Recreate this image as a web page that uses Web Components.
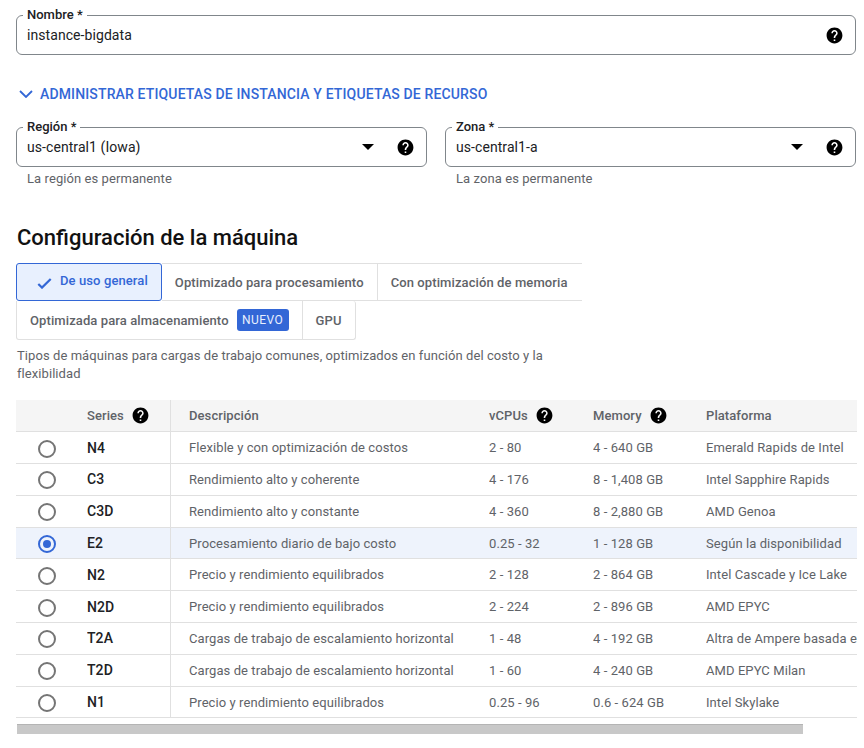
<!DOCTYPE html>
<html lang="es">
<head>
<meta charset="utf-8">
<title>Crear instancia</title>
<style>
  html, body { margin: 0; background: #fff; overflow: hidden; height: 100%; }
  body { font-family: Roboto, "Liberation Sans", sans-serif; color: #202124; }
  machine-form { display: block; width: 864px; height: 748px; }
</style>
</head>
<body>
<machine-form></machine-form>

<template id="help-tpl">
  <style>
    :host { display: inline-flex; width: 19px; height: 19px; flex: none; }
    svg { width: 100%; height: 100%; display: block; }
  </style>
  <svg viewBox="0 0 24 24"><path fill="#000" d="M12 2C6.48 2 2 6.48 2 12s4.48 10 10 10 10-4.48 10-10S17.52 2 12 2zm1 17h-2v-2h2v2zm2.07-7.75l-.9.92C13.45 12.9 13 13.5 13 15h-2v-.5c0-1.1.45-2.1 1.17-2.83l1.24-1.26c.37-.36.59-.86.59-1.41 0-1.1-.9-2-2-2s-2 .9-2 2H8c0-2.21 1.79-4 4-4s4 1.79 4 4c0 .88-.36 1.68-.93 2.25z"/></svg>
</template>

<script>
function tpl(id) {
  return document.getElementById(id).content.cloneNode(true);
}

class GcHelp extends HTMLElement {
  connectedCallback() {
    this.attachShadow({ mode: 'open' }).appendChild(tpl('help-tpl'));
  }
}
customElements.define('gc-help', GcHelp);

class GcField extends HTMLElement {
  connectedCallback() {
    const select = this.hasAttribute('select');
    const hint = this.getAttribute('hint');
    this.attachShadow({ mode: 'open' }).innerHTML = `
      <style>
        :host { display: block; }
        .box {
          position: relative;
          height: 40px;
          box-sizing: border-box;
          border: 1px solid #80868b;
          border-radius: 6px;
          display: flex;
          align-items: center;
          padding: 0 11px 0 10px;
        }
        .label {
          position: absolute;
          left: 6px;
          top: -9px;
          padding: 0 4px;
          background: #fff;
          font-size: 13px;
          line-height: 16px;
          font-weight: 500;
          color: #202124;
        }
        .value { flex: 1; font-size: 14px; letter-spacing: .07px; line-height: 20px; color: #202124; }
        .arrow {
          width: 0; height: 0;
          border-left: 6px solid transparent;
          border-right: 6px solid transparent;
          border-top: 6px solid #000;
          margin-right: 22px;
        }
        .hint { font-size: 13px; letter-spacing: .08px; line-height: 16px; color: #5f6368; padding: 4px 0 0 11px; }
      </style>
      <div class="box">
        <span class="label">${this.getAttribute('label')}</span>
        <span class="value">${this.getAttribute('value')}</span>
        ${select ? '<span class="arrow"></span>' : ''}
        <gc-help></gc-help>
      </div>
      ${hint ? `<div class="hint">${hint}</div>` : ''}
    `;
  }
}
customElements.define('gc-field', GcField);

class GcLink extends HTMLElement {
  connectedCallback() {
    this.attachShadow({ mode: 'open' }).innerHTML = `
      <style>
        :host {
          display: flex;
          align-items: center;
          gap: 7px;
          color: #3367d6;
          font-size: 14px;
          font-weight: 500;
          letter-spacing: .14px;
          line-height: 20px;
        }
        svg { width: 14px; height: 8px; margin-left: 3px; display: block; }
      </style>
      <svg viewBox="0 0 14 8"><path d="M1 1l6 6 6-6" fill="none" stroke="#3367d6" stroke-width="1.8"/></svg>
      <slot></slot>
    `;
  }
}
customElements.define('gc-link', GcLink);

class GcTab extends HTMLElement {
  connectedCallback() {
    this.attachShadow({ mode: 'open' }).innerHTML = `
      <style>
        :host {
          display: flex;
          align-items: center;
          box-sizing: border-box;
          height: 100%;
          padding: 0 13px;
          font-size: 13px;
          letter-spacing: .1px;
          font-weight: 500;
          color: #5f6368;
          white-space: nowrap;
          border: solid #e0e0e0;
          border-width: 1px 1px 1px 0;
        }
        :host([first]) { border-left-width: 1px; }
        :host([open-end]) { border-right-width: 0; flex: 1; }
        :host([selected]) {
          background: #e8f0fe;
          color: #3367d6;
          border: 1px solid #3367d6;
          border-radius: 3px;
          padding: 0 13px 3px 20px;
          gap: 8px;
        }
        svg { width: 15px; height: 12px; margin-top: 4px; }
      </style>
      ${this.hasAttribute('selected') ? '<svg viewBox="0 0 15 12"><path d="M1.3 7l3.7 3.6L13.7 2" fill="none" stroke="#3367d6" stroke-width="2.2"/></svg>' : ''}
      <slot></slot>
    `;
  }
}
customElements.define('gc-tab', GcTab);

class GcBadge extends HTMLElement {
  connectedCallback() {
    this.attachShadow({ mode: 'open' }).innerHTML = `
      <style>
        :host {
          display: inline-flex;
          align-items: center;
          justify-content: center;
          width: 52px;
          height: 22px;
          margin-left: 8px;
          background: #3367d6;
          color: #e8f0fe;
          border-radius: 3px;
          font-size: 12px;
          font-weight: 400;
          letter-spacing: .4px;
        }
      </style>
      <slot></slot>
    `;
  }
}
customElements.define('gc-badge', GcBadge);

class GcRadio extends HTMLElement {
  connectedCallback() {
    this.attachShadow({ mode: 'open' }).innerHTML = `
      <style>
        :host {
          display: block;
          box-sizing: border-box;
          width: 18px;
          height: 18px;
          margin-top: 2px;
          border: 2px solid #757575;
          border-radius: 50%;
          position: relative;
        }
        :host([checked]) { border-color: #3367d6; }
        .dot { position: absolute; inset: 3px; border-radius: 50%; background: #3367d6; }
      </style>
      ${this.hasAttribute('checked') ? '<div class="dot"></div>' : ''}
    `;
  }
}
customElements.define('gc-radio', GcRadio);

class MachineRow extends HTMLElement {
  connectedCallback() {
    const d = this.dataset;
    const on = this.hasAttribute('selected');
    this.attachShadow({ mode: 'open' }).innerHTML = `
      <style>
        :host {
          display: grid;
          grid-template-columns: 71px 83px 1px 318px 104px 113px 1fr;
          box-sizing: border-box;
          height: 31.8px;
          border-bottom: 1px solid #e0e0e0;
          font-size: 13px;
          letter-spacing: .08px;
          color: #5f6368;
          white-space: nowrap;
          overflow: hidden;
        }
        :host([selected]) { background: #eef3fc; }
        .cell { display: flex; align-items: center; min-width: 0; overflow: hidden; }
        .radio { padding-left: 22px; }
        .series { font-size: 14px; font-weight: 500; color: #202124; }
        .sep { background: #e0e0e0; }
        .desc { padding-left: 18px; }
      </style>
      <div class="cell radio"><gc-radio ${on ? 'checked' : ''}></gc-radio></div>
      <div class="cell series">${d.series}</div>
      <div class="sep"></div>
      <div class="cell desc">${d.desc}</div>
      <div class="cell">${d.cpu}</div>
      <div class="cell">${d.mem}</div>
      <div class="cell">${d.plat}</div>
    `;
  }
}
customElements.define('machine-row', MachineRow);

class MachineHead extends HTMLElement {
  connectedCallback() {
    this.attachShadow({ mode: 'open' }).innerHTML = `
      <style>
        :host {
          display: grid;
          grid-template-columns: 71px 83px 1px 318px 104px 113px 1fr;
          box-sizing: border-box;
          height: 32.3px;
          background: #f5f5f5;
          border-bottom: 1px solid #e0e0e0;
          font-size: 13px;
          letter-spacing: .08px;
          font-weight: 500;
          color: #5f6368;
        }
        .cell { display: flex; align-items: center; gap: 7px; }
        .sep { background: #e0e0e0; }
        .desc { padding-left: 18px; }
      </style>
      <div class="cell"></div>
      <div class="cell">Series <gc-help></gc-help></div>
      <div class="sep"></div>
      <div class="cell desc">Descripción</div>
      <div class="cell">vCPUs <gc-help></gc-help></div>
      <div class="cell">Memory <gc-help></gc-help></div>
      <div class="cell">Plataforma</div>
    `;
  }
}
customElements.define('machine-head', MachineHead);

const MACHINES = [
  ['N4', 'Flexible y con optimización de costos', '2 - 80', '4 - 640 GB', 'Emerald Rapids de Intel'],
  ['C3', 'Rendimiento alto y coherente', '4 - 176', '8 - 1,408 GB', 'Intel Sapphire Rapids'],
  ['C3D', 'Rendimiento alto y constante', '4 - 360', '8 - 2,880 GB', 'AMD Genoa'],
  ['E2', 'Procesamiento diario de bajo costo', '0.25 - 32', '1 - 128 GB', 'Según la disponibilidad'],
  ['N2', 'Precio y rendimiento equilibrados', '2 - 128', '2 - 864 GB', 'Intel Cascade y Ice Lake'],
  ['N2D', 'Precio y rendimiento equilibrados', '2 - 224', '2 - 896 GB', 'AMD EPYC'],
  ['T2A', 'Cargas de trabajo de escalamiento horizontal', '1 - 48', '4 - 192 GB', 'Altra de Ampere basada en Arm'],
  ['T2D', 'Cargas de trabajo de escalamiento horizontal', '1 - 60', '4 - 240 GB', 'AMD EPYC Milan'],
  ['N1', 'Precio y rendimiento equilibrados', '0.25 - 96', '0.6 - 624 GB', 'Intel Skylake']
];

class MachineTable extends HTMLElement {
  connectedCallback() {
    const rows = MACHINES.map(m => `<machine-row ${m[0] === 'E2' ? 'selected' : ''}
      data-series="${m[0]}" data-desc="${m[1]}" data-cpu="${m[2]}" data-mem="${m[3]}" data-plat="${m[4]}"></machine-row>`).join('');
    this.attachShadow({ mode: 'open' }).innerHTML = `
      <style>
        :host { display: block; width: 841px; overflow: hidden; }
        .bar { height: 10px; width: 786px; margin: 6px 0 0 1px; background: #c8c8c8; border-top: 1px solid #b4b4b4; box-sizing: border-box; }
      </style>
      <machine-head></machine-head>
      ${rows}
      <div class="bar"></div>
    `;
  }
}
customElements.define('machine-table', MachineTable);

class MachineForm extends HTMLElement {
  connectedCallback() {
    this.attachShadow({ mode: 'open' }).innerHTML = `
      <style>
        :host { display: block; box-sizing: border-box; padding: 15px 8px 0 16px; }
        gc-link { margin-top: 29px; }
        .pair { display: grid; grid-template-columns: 411px 411px; gap: 18px; margin-top: 23px; }
        h2 { margin: 37px 0 0 1px; font-size: 22px; line-height: 28px; font-weight: 500; color: #111; }
        .tabs { margin-top: 11px; width: 566px; }
        .tab-row { display: flex; height: 38px; }
        .tab-row + .tab-row { height: 39px; margin-top: 0; }
        .tab-row.two { width: 340px; }
        .tab-row.two gc-tab { border-top-width: 0; }
        .tab-row.two gc-tab:last-child { border-radius: 0 3px 3px 0; }
        .tab-row.two gc-tab:first-child { border-radius: 0 0 0 3px; }
        p { margin: 7px 0 0 1px; font-size: 13px; letter-spacing: .07px; line-height: 18px; color: #5f6368; width: 540px; }
        machine-table { margin-top: 17px; }
      </style>
      <gc-field label="Nombre *" value="instance-bigdata"></gc-field>
      <gc-link>ADMINISTRAR ETIQUETAS DE INSTANCIA Y ETIQUETAS DE RECURSO</gc-link>
      <div class="pair">
        <gc-field select label="Región *" value="us-central1 (Iowa)" hint="La región es permanente"></gc-field>
        <gc-field select label="Zona *" value="us-central1-a" hint="La zona es permanente"></gc-field>
      </div>
      <h2>Configuración de la máquina</h2>
      <div class="tabs">
        <div class="tab-row">
          <gc-tab first selected>De uso general</gc-tab>
          <gc-tab>Optimizado para procesamiento</gc-tab>
          <gc-tab open-end>Con optimización de memoria</gc-tab>
        </div>
        <div class="tab-row two">
          <gc-tab first>Optimizada para almacenamiento<gc-badge>NUEVO</gc-badge></gc-tab>
          <gc-tab>GPU</gc-tab>
        </div>
      </div>
      <p>Tipos de máquinas para cargas de trabajo comunes, optimizados en función del costo y la flexibilidad</p>
      <machine-table></machine-table>
    `;
  }
}
customElements.define('machine-form', MachineForm);
</script>
</body>
</html>
